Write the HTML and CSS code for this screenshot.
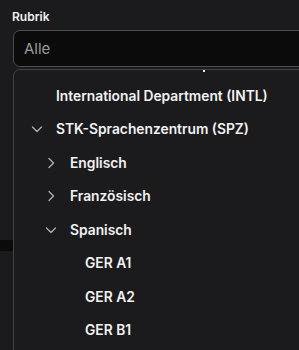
FILE: index.html
```html
<!DOCTYPE html>
<html lang="de">
<head>
<meta charset="utf-8">
<link rel="stylesheet" href="styles.css">
</head>
<body>
<div class="field">
  <label class="label">Rubrik</label>
  <div class="input">Alle</div>
  <div class="backdrop-strip"></div>
  <div class="menu">
    <span class="scroll-dot"></span>
    <div class="row lvl0"><span class="chev"></span><span>International Department (INTL)</span></div>
    <div class="row lvl0"><span class="chev"><svg viewBox="0 0 12 12"><path d="M1.5 4l4.5 4.5 4.5-4.5"/></svg></span><span>STK-Sprachenzentrum (SPZ)</span></div>
    <div class="row lvl1"><span class="chev"><svg viewBox="0 0 12 12"><path d="M4 1.5l4.5 4.5-4.5 4.5"/></svg></span><span>Englisch</span></div>
    <div class="row lvl1"><span class="chev"><svg viewBox="0 0 12 12"><path d="M4 1.5l4.5 4.5-4.5 4.5"/></svg></span><span>Französisch</span></div>
    <div class="row lvl1"><span class="chev"><svg viewBox="0 0 12 12"><path d="M1.5 4l4.5 4.5 4.5-4.5"/></svg></span><span>Spanisch</span></div>
    <div class="row lvl2"><span class="chev"></span><span>GER A1</span></div>
    <div class="row lvl2"><span class="chev"></span><span>GER A2</span></div>
    <div class="row lvl2"><span class="chev"></span><span>GER B1</span></div>
  </div>
</div>
</body>
</html>
```

FILE: styles.css
```css
* { box-sizing: border-box; }
html, body { margin: 0; padding: 0; }
body {
  background: #1b1b1d;
  font-family: Inter, "Noto Sans", sans-serif;
  color: #f2f2f2;
  width: 299px;
  height: 350px;
  overflow: hidden;
}
.field {
  position: relative;
  padding: 9px 0 0 13px;
}
.label {
  display: block;
  font-size: 12px;
  font-weight: 600;
  line-height: 16px;
  margin-left: -1px;
  color: #f0f0f0;
}
.input {
  margin-top: 5px;
  width: 300px;
  height: 37px;
  border: 1px solid #4c4c4f;
  border-radius: 7px;
  background: #0b0b0c;
  color: #9a9a9a;
  font-size: 15px;
  padding: 0 10px;
  line-height: 35px;
}
.backdrop-strip {
  position: absolute;
  left: 0;
  top: 240px;
  width: 14px;
  height: 11px;
  background: #0b0b0c;
}
.menu {
  position: relative;
  margin-top: 2px;
  width: 300px;
  height: 290px;
  border: 1px solid #434346;
  border-radius: 7px;
  background: #1b1b1d;
  padding-top: 9px;
}
.scroll-dot {
  position: absolute;
  left: 189px;
  top: 0px;
  width: 2px;
  height: 2px;
  background: #e8e8e8;
}
.row {
  display: flex;
  align-items: center;
  height: 33.5px;
  font-size: 13.8px;
  font-weight: 600;
  color: #f2f2f2;
}
.chev {
  width: 24px;
  display: flex;
  justify-content: center;
  align-items: center;
  margin-right: 7px;
}
.chev svg {
  width: 12px;
  height: 12px;
  fill: none;
  stroke: #b0b0b0;
  stroke-width: 1.3;
  stroke-linecap: round;
  stroke-linejoin: round;
}
.lvl0 { padding-left: 11px; }
.lvl1 { padding-left: 25px; }
.lvl2 { padding-left: 40px; }
```
